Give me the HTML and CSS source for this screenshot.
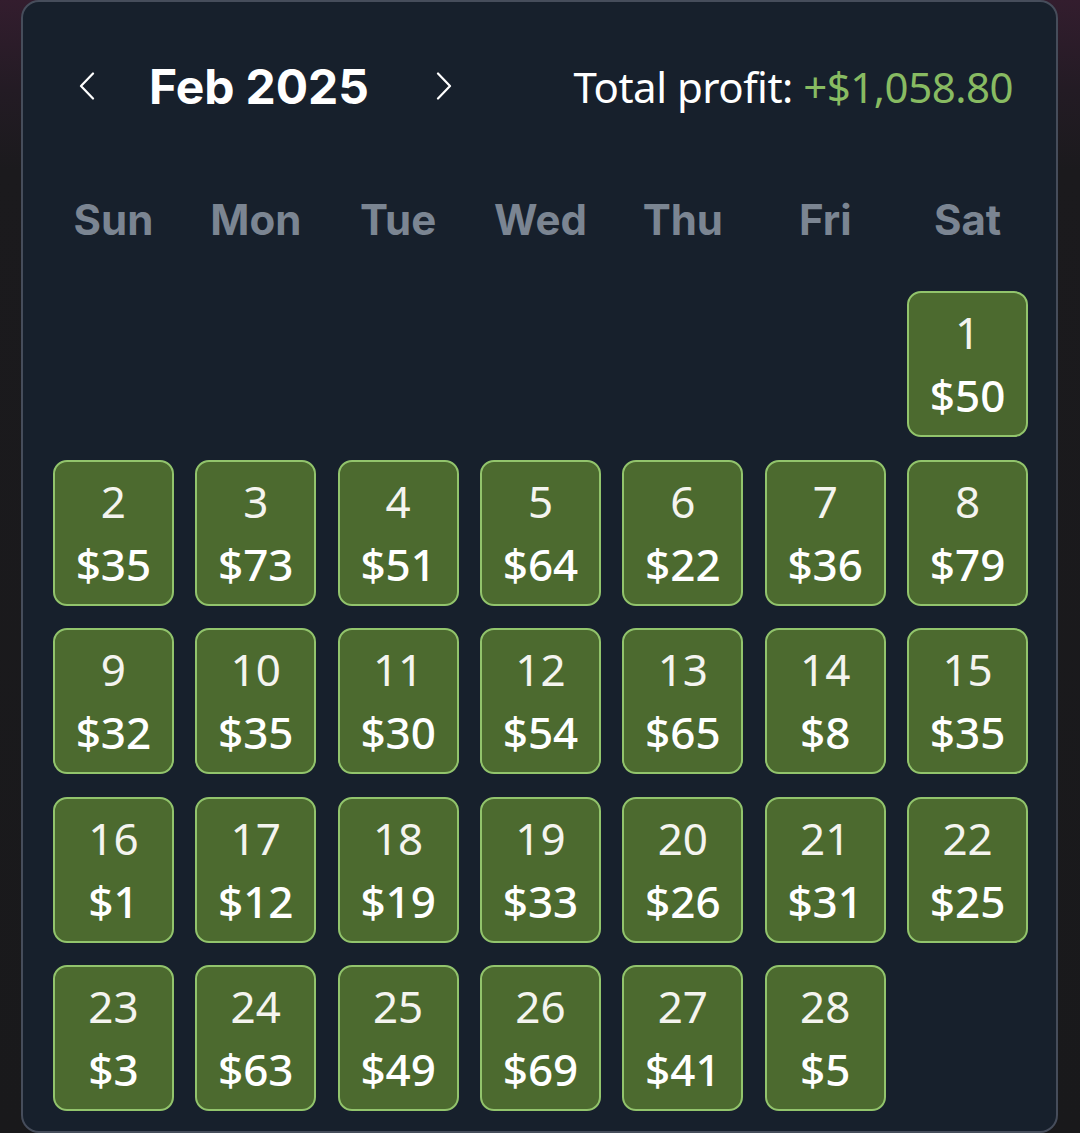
FILE: index.html
```html
<!DOCTYPE html>
<html lang="en">
<head>
    <meta charset="UTF-8">
    <meta name="viewport" content="width=device-width, initial-scale=1.0">
    <title>Profit Calendar</title>
    <link rel="stylesheet" href="styles.css">
</head>
<body>

    <div class="calendar">
        <div class="calendar-header">
            <div class="month-nav">
                <button class="nav-btn" aria-label="Previous month">
                    <svg width="16" height="28" viewBox="0 0 16 28"><path d="M14 1.5 L2 14 L14 26.5" fill="none" stroke="#fff" stroke-width="2.2" stroke-linecap="round" stroke-linejoin="round"/></svg>
                </button>
                <h2 class="month-title">Feb 2025</h2>
                <button class="nav-btn" aria-label="Next month">
                    <svg width="16" height="28" viewBox="0 0 16 28"><path d="M2 1.5 L14 14 L2 26.5" fill="none" stroke="#fff" stroke-width="2.2" stroke-linecap="round" stroke-linejoin="round"/></svg>
                </button>
            </div>
            <div class="total">Total profit: <span class="gain">+$1,058.80</span></div>
        </div>

        <div class="weekdays">
            <span>Sun</span><span>Mon</span><span>Tue</span><span>Wed</span><span>Thu</span><span>Fri</span><span>Sat</span>
        </div>

        <div class="days">
            <div class="blank"></div>
            <div class="blank"></div>
            <div class="blank"></div>
            <div class="blank"></div>
            <div class="blank"></div>
            <div class="blank"></div>
            <div class="day"><span class="num">1</span><span class="amt">$50</span></div>

            <div class="day"><span class="num">2</span><span class="amt">$35</span></div>
            <div class="day"><span class="num">3</span><span class="amt">$73</span></div>
            <div class="day"><span class="num">4</span><span class="amt">$51</span></div>
            <div class="day"><span class="num">5</span><span class="amt">$64</span></div>
            <div class="day"><span class="num">6</span><span class="amt">$22</span></div>
            <div class="day"><span class="num">7</span><span class="amt">$36</span></div>
            <div class="day"><span class="num">8</span><span class="amt">$79</span></div>

            <div class="day"><span class="num">9</span><span class="amt">$32</span></div>
            <div class="day"><span class="num">10</span><span class="amt">$35</span></div>
            <div class="day"><span class="num">11</span><span class="amt">$30</span></div>
            <div class="day"><span class="num">12</span><span class="amt">$54</span></div>
            <div class="day"><span class="num">13</span><span class="amt">$65</span></div>
            <div class="day"><span class="num">14</span><span class="amt">$8</span></div>
            <div class="day"><span class="num">15</span><span class="amt">$35</span></div>

            <div class="day"><span class="num">16</span><span class="amt">$1</span></div>
            <div class="day"><span class="num">17</span><span class="amt">$12</span></div>
            <div class="day"><span class="num">18</span><span class="amt">$19</span></div>
            <div class="day"><span class="num">19</span><span class="amt">$33</span></div>
            <div class="day"><span class="num">20</span><span class="amt">$26</span></div>
            <div class="day"><span class="num">21</span><span class="amt">$31</span></div>
            <div class="day"><span class="num">22</span><span class="amt">$25</span></div>

            <div class="day"><span class="num">23</span><span class="amt">$3</span></div>
            <div class="day"><span class="num">24</span><span class="amt">$63</span></div>
            <div class="day"><span class="num">25</span><span class="amt">$49</span></div>
            <div class="day"><span class="num">26</span><span class="amt">$69</span></div>
            <div class="day"><span class="num">27</span><span class="amt">$41</span></div>
            <div class="day"><span class="num">28</span><span class="amt">$5</span></div>
        </div>
    </div>

</body>
</html>
```

FILE: styles.css
```css
html, body {
    height: 100%;
}

body {
    margin: 0;
    padding: 0 22px 0 21px;
    background: linear-gradient(180deg, #331d2e 0, #231b24 90px, #1b1a1d 170px, #19191b 100%);
    font-family: "Noto Sans", sans-serif;
    overflow: hidden;
}

.calendar {
    box-sizing: border-box;
    height: 1133px;
    padding: 54px 28px 0 30px;
    background: #17202c;
    border: 2px solid #464d5b;
    border-radius: 18px;
}

.calendar-header {
    display: flex;
    align-items: center;
    justify-content: space-between;
    height: 60px;
}

.month-nav {
    display: flex;
    align-items: center;
    padding-left: 26px;
}

.nav-btn {
    display: flex;
    padding: 0;
    border: none;
    background: none;
    cursor: pointer;
}

.month-title {
    margin: 0 67px 0 54px;
    font-family: Inter, "Liberation Sans", sans-serif;
    font-size: 48px;
    font-weight: 700;
    color: #ffffff;
    letter-spacing: -0.1px;
}

.total {
    margin-right: 15px;
    font-size: 42px;
    color: #ffffff;
    letter-spacing: -0.5px;
}

.gain {
    color: #88bb62;
}

.weekdays {
    display: grid;
    grid-template-columns: repeat(7, 1fr);
    column-gap: 21.5px;
    margin-top: 74px;
    height: 60px;
    line-height: 60px;
    text-align: center;
    font-family: Inter, "Liberation Sans", sans-serif;
    font-size: 42px;
    font-weight: 700;
    color: #7b8592;
}

.days {
    display: grid;
    grid-template-columns: repeat(7, 1fr);
    grid-auto-rows: 146px;
    column-gap: 21.5px;
    row-gap: 22.5px;
    margin-top: 41px;
}

.day {
    display: flex;
    flex-direction: column;
    align-items: center;
    justify-content: center;
    background: #4c6a2f;
    border: 2px solid #92c46c;
    border-radius: 14px;
    color: #ffffff;
    font-size: 44px;
    line-height: 63px;
}

.day .num {
    color: #f4f4ef;
}

.day .amt {
    font-weight: 500;
}
```
